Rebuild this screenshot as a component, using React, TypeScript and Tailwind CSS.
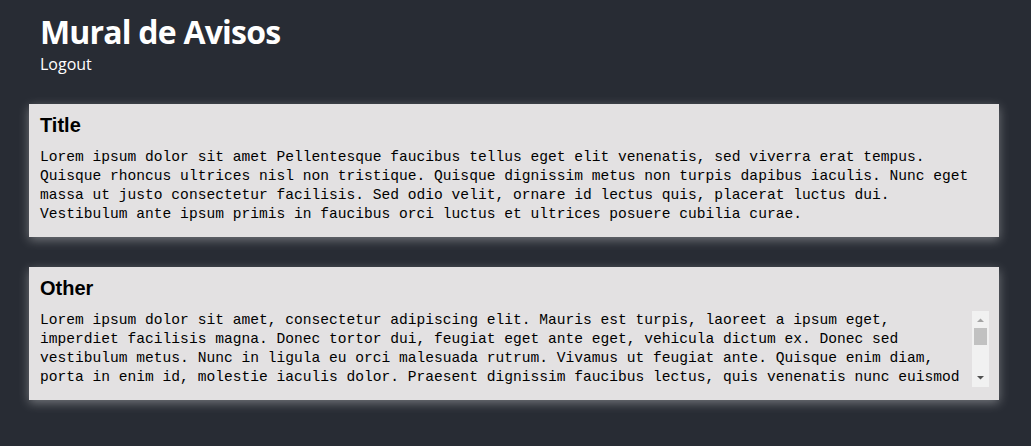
import React from 'react';

interface Notice {
  id: number;
  title: string;
  body: string;
  scroll?: boolean;
}

const notices: Notice[] = [
  {
    id: 1,
    title: 'Title',
    body:
      'Lorem ipsum dolor sit amet Pellentesque faucibus tellus eget elit venenatis, sed viverra erat tempus. Quisque rhoncus ultrices nisl non tristique. Quisque dignissim metus non turpis dapibus iaculis. Nunc eget massa ut justo consectetur facilisis. Sed odio velit, ornare id lectus quis, placerat luctus dui. Vestibulum ante ipsum primis in faucibus orci luctus et ultrices posuere cubilia curae.',
  },
  {
    id: 2,
    title: 'Other',
    scroll: true,
    body:
      'Lorem ipsum dolor sit amet, consectetur adipiscing elit. Mauris est turpis, laoreet a ipsum eget, imperdiet facilisis magna. Donec tortor dui, feugiat eget ante eget, vehicula dictum ex. Donec sed vestibulum metus. Nunc in ligula eu orci malesuada rutrum. Vivamus ut feugiat ante. Quisque enim diam, porta in enim id, molestie iaculis dolor. Praesent dignissim faucibus lectus, quis venenatis nunc euismod sit amet. Fusce vitae lorem nec nisi volutpat commodo. Sed at tortor sed nibh gravida tincidunt. Aliquam erat volutpat. Etiam ac velit ut magna pulvinar fermentum.',
  },
];

const mono = "font-['Liberation_Mono','Courier_New',monospace] text-[14.6px] leading-[19px] text-black";

// classic scrollbar look, drawn beside the text column
const ScrollBar: React.FC = () => (
  <div className="flex w-[17px] shrink-0 flex-col items-center bg-[#f1f1f1]">
    <svg width="17" height="17" viewBox="0 0 17 17" className="shrink-0">
      <path d="M5 11 L8.5 7.5 L12 11 Z" fill="#a3a3a3" />
    </svg>
    <div className="h-[17px] w-[13px] bg-[#c1c1c1]" />
    <div className="flex-1" />
    <svg width="17" height="17" viewBox="0 0 17 17" className="shrink-0">
      <path d="M5 6 L12 6 L8.5 9.5 Z" fill="#505050" />
    </svg>
  </div>
);

const NoticeCard: React.FC<{ notice: Notice }> = ({ notice }) => (
  <div className="bg-[#e3e1e2] pt-[9px] pb-[13px] pl-[11px] pr-[16px] shadow-[0_3px_10px_rgba(255,255,255,0.35)]">
    <h2 className="font-['Liberation_Sans',Arial,sans-serif] text-[20px] leading-[24px] font-bold text-black">
      {notice.title}
    </h2>
    {notice.scroll ? (
      <div className="mt-[11px] mr-[-6px] flex h-[76px]">
        <div className={`flex-1 overflow-y-auto [scrollbar-width:none] ${mono}`}>{notice.body}</div>
        <ScrollBar />
      </div>
    ) : (
      <div className={`mt-[11px] ${mono}`}>{notice.body}</div>
    )}
  </div>
);

export default function App() {
  return (
    <div className="min-h-screen bg-[#282c34] font-['Open_Sans',sans-serif] text-white">
      {/* Header */}
      <div className="pl-[40px] pt-[13px]">
        <h1 className="text-[32px] leading-[38px] font-bold tracking-[-0.8px]">Mural de Avisos</h1>
        <div className="mt-[3px] text-[16px] leading-[20px]">Logout</div>
      </div>

      {/* Notices */}
      <div className="mt-[30px] flex flex-col gap-[30px] pl-[29px] pr-[32px] pb-[40px]">
        {notices.map((n) => (
          <NoticeCard key={n.id} notice={n} />
        ))}
      </div>
    </div>
  );
}
